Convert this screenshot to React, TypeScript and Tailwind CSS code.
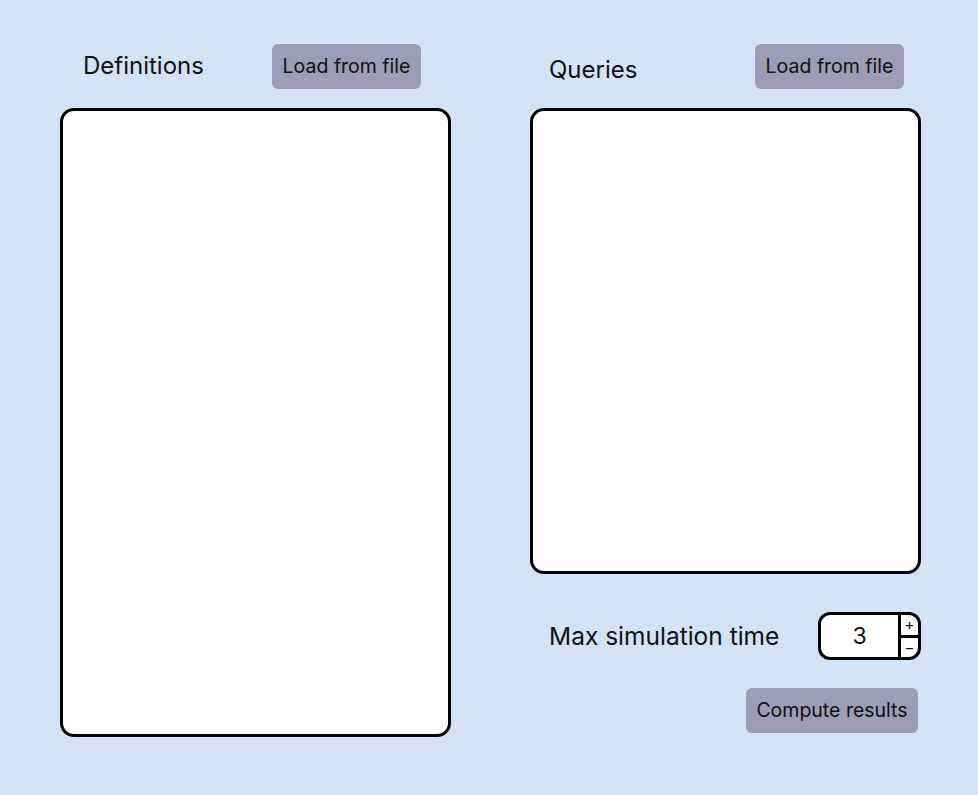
import { useState } from 'react';

const font = { fontFamily: 'Inter, "Noto Sans", sans-serif' };

function LoadButton() {
  return (
    <button className="h-[45px] w-[149px] rounded-[6px] bg-[#9c9cb6] text-[19.5px] text-[#111111]">
      Load from file
    </button>
  );
}

export default function App() {
  const [time, setTime] = useState(3);

  return (
    <div className="min-h-[795px] w-full bg-[#d3e2f4] text-[#111111]" style={font}>
      <div className="flex gap-[79px] pl-[60px] pt-[44px]">
        {/* Definitions */}
        <div className="flex w-[391px] flex-col">
          <div className="flex h-[45px] items-center justify-between pl-[23px] pr-[30px]">
            <span className="text-[24px] leading-none -mt-[2px]">Definitions</span>
            <LoadButton />
          </div>
          <textarea className="mt-[19px] h-[629px] resize-none rounded-[14px] border-[3px] border-black bg-white p-3 outline-none" />
        </div>

        {/* Queries */}
        <div className="flex w-[391px] flex-col">
          <div className="flex h-[45px] items-center justify-between pl-[19px] pr-[17px]">
            <span className="mt-[6px] text-[24px] leading-none">Queries</span>
            <LoadButton />
          </div>
          <textarea className="mt-[19px] h-[466px] resize-none rounded-[14px] border-[3px] border-black bg-white p-3 outline-none" />

          <div className="mt-[38px] flex h-[48px] items-center justify-between pl-[19px]">
            <span className="text-[24.5px]">Max simulation time</span>
            <div className="flex h-[48px] w-[103px] overflow-hidden rounded-[12px] border-[3px] border-black bg-white">
              <div className="flex flex-1 items-center justify-center text-[23px]">{time}</div>
              <div className="flex w-[20px] flex-col border-l-[3px] border-black">
                <button
                  className="flex flex-1 items-center justify-center border-b-[3px] border-black text-[15px] leading-none"
                  onClick={() => setTime(time + 1)}
                >
                  +
                </button>
                <button
                  className="flex flex-1 items-center justify-center text-[15px] leading-none"
                  onClick={() => setTime(Math.max(0, time - 1))}
                >
                  −
                </button>
              </div>
            </div>
          </div>

          <div className="mt-[28px] flex justify-end pr-[3px]">
            <button className="h-[45px] w-[172px] rounded-[6px] bg-[#9c9cb6] text-[19.5px] text-[#111111]">
              Compute results
            </button>
          </div>
        </div>
      </div>
    </div>
  );
}
